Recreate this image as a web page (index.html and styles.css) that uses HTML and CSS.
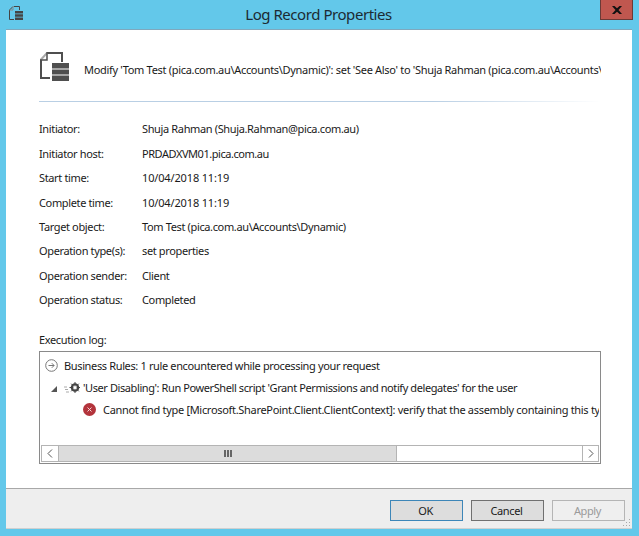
FILE: index.html
```html
<!DOCTYPE html>
<html lang="en">
<head>
<meta charset="utf-8">
<title>Log Record Properties</title>
<link rel="stylesheet" href="styles.css">
</head>
<body>
<div class="window">
  <header class="titlebar">
    <svg class="title-icon" width="15" height="15" viewBox="0 0 15 15"><path d="M5 .5h5.500V4M.5 4v9.500H5M.5 4L4 .5" fill="none" stroke="#444"/><path d="M4 .5V4H.5" fill="none" stroke="#888"/><path d="M6 5h8v2.500H6zM6 8.300h8v2.500H6zM6 11.600h8v2.400H6z" fill="#444"/></svg>
    <h1 class="title">Log Record Properties</h1>
    <button class="close" aria-label="Close"><svg width="10" height="8" viewBox="0 0 10 8"><path d="M0 0h2.500L5 2.300 7.500 0H10L6.500 4 10 8H7.500L5 5.700 2.500 8H0l3.500-4z" fill="#111"/></svg></button>
  </header>
  <main class="client">
    <div class="content">
      <div class="summary">
        <svg class="summary-icon" width="29" height="29" viewBox="0 0 29 29"><path d="M7 1h15v9M1 7.500V26h9" fill="none" stroke="#4f4f4f" stroke-width="2"/><path d="M7 1L1 7.500" fill="none" stroke="#aaa" stroke-width="2"/><path d="M7 0v8H0" fill="none" stroke="#4f4f4f" stroke-width="1.500"/><path d="M12 11h17v5.500H12zM12 17.500h17v5H12zM12 23.500h17V29H12z" fill="#4f4f4f"/></svg>
        <p class="summary-text">Modify 'Tom Test (pica.com.au\Accounts\Dynamic)': set 'See Also' to 'Shuja Rahman (pica.com.au\Accounts\Dynamic)'</p>
      </div>
      <div class="rule"></div>
      <dl class="props">
        <dt>Initiator:</dt><dd>Shuja Rahman (Shuja.Rahman@pica.com.au)</dd>
        <dt>Initiator host:</dt><dd class="host">PRDADXVM01.pica.com.au</dd>
        <dt>Start time:</dt><dd class="date">10/04/2018 11:19</dd>
        <dt>Complete time:</dt><dd class="date">10/04/2018 11:19</dd>
        <dt>Target object:</dt><dd>Tom Test (pica.com.au\Accounts\Dynamic)</dd>
        <dt>Operation type(s):</dt><dd>set properties</dd>
        <dt>Operation sender:</dt><dd>Client</dd>
        <dt>Operation status:</dt><dd>Completed</dd>
      </dl>
      <div class="log-label">Execution log:</div>
      <div class="log">
        <div class="log-rows">
          <div class="log-row">
            <svg class="ico-info" width="13" height="13" viewBox="0 0 13 13"><circle cx="6.500" cy="6.500" r="5.800" fill="none" stroke="#777"/><path d="M3.500 6.500h5.500M6.800 4.200l2.300 2.300-2.300 2.300" fill="none" stroke="#777"/></svg>
            <span>Business Rules: 1 rule encountered while processing your request</span>
          </div>
          <div class="log-row row-two">
            <svg class="ico-tri" width="6" height="6" viewBox="0 0 6 6"><path d="M6 0v6H0z" fill="#555"/></svg>
            <svg class="ico-gear" width="16" height="11" viewBox="0 0 16 11"><path d="M0 5h3M1 7.500h3M2 10h3" stroke="#aaa" fill="none"/><circle cx="11" cy="5.500" r="3.300" fill="none" stroke="#444" stroke-width="2"/><path d="M11 0v11M5.500 5.500h11M7.200 1.700l7.600 7.600M14.800 1.700l-7.600 7.600" stroke="#444"/><circle cx="11" cy="5.500" r="1.600" fill="#fff"/></svg>
            <span>'User Disabling': Run PowerShell script 'Grant Permissions and notify delegates' for the user</span>
          </div>
          <div class="log-row row-three">
            <svg class="ico-err" width="13" height="13" viewBox="0 0 13 13"><circle cx="6.500" cy="6.500" r="6.500" fill="#b3343c"/><path d="M4.500 4.500l4 4M8.500 4.500l-4 4" stroke="#f4d6d6"/></svg>
            <span>Cannot find type [Microsoft.SharePoint.Client.ClientContext]: verify that the assembly containing this type is loaded.</span>
          </div>
        </div>
        <div class="scrollbar">
          <div class="sb-btn"><svg width="6" height="9" viewBox="0 0 6 9"><path d="M5 .5L1 4.500l4 4" fill="none" stroke="#555"/></svg></div>
          <div class="sb-track">
            <div class="sb-thumb"><svg width="8" height="7" viewBox="0 0 8 7"><path d="M0 0h2v7H0zM3 0h2v7H3zM6 0h2v7H6z" fill="#666"/></svg></div>
          </div>
          <div class="sb-btn sb-btn-end"><svg width="6" height="9" viewBox="0 0 6 9"><path d="M1 .5l4 4-4 4" fill="none" stroke="#555"/></svg></div>
        </div>
      </div>
    </div>
    <footer class="footer">
      <button class="btn btn-default">OK</button>
      <button class="btn">Cancel</button>
      <button class="btn btn-disabled">Apply</button>
      <svg class="grip" width="9" height="8" viewBox="0 0 9 8"><path d="M7 0h1v1H7zM4 3h1v1H4zM7 3h1v1H7zM1 6h1v1H1zM4 6h1v1H4zM7 6h1v1H7z" fill="#a9a9a9"/></svg>
    </footer>
  </main>
</div>
</body>
</html>
```
FILE: styles.css
```css
* { box-sizing: border-box; }
html, body { margin: 0; height: 100%; }
body { font-family: "Noto Sans", "Open Sans", sans-serif; font-size: 11px; letter-spacing: -0.360px; color: #1a1a1a; background: #63c8ea; overflow: hidden; }
.window { width: 639px; height: 536px; display: flex; flex-direction: column; padding: 0 7px 7px 6px; }
.titlebar { height: 29px; flex: none; position: relative; margin: 0 -7px 0 -6px; }
.title-icon { position: absolute; left: 9px; top: 6px; }
.title { margin: 0; padding-right: 2px; text-align: center; font-size: 15px; letter-spacing: -0.450px; font-weight: 400; line-height: 29px; color: #1c2b33; }
.close { position: absolute; left: 600px; top: 0; width: 33px; height: 20px; padding: 0; border: 1px solid #6b3a36; border-top: 0; background: #c0574f; display: flex; align-items: center; justify-content: center; }
.client { flex: 1; background: #fff; display: flex; flex-direction: column; border-top: 1px solid #7fa8bd; }
.content { flex: 1; min-height: 0; padding: 0 31px 0 33px; display: flex; flex-direction: column; }
.summary { height: 71px; flex: none; display: flex; align-items: center; padding-top: 1px; }
.summary-icon { flex: none; margin-left: 1px; }
.summary-text { margin: 6px 0 0 15px; white-space: nowrap; overflow: hidden; flex: 1; min-width: 0; letter-spacing: -0.310px; }
.rule { height: 1px; flex: none; background: linear-gradient(to right, #b9cfe4, #b9cfe4 70%, #fff); }
.props { margin: 15.300px 0 0; display: grid; grid-template-columns: 103px 1fr; grid-auto-rows: 24.430px; line-height: 24.430px; }
.props dd { margin: 0; }
.props .date { letter-spacing: -0.150px; }
.props .host { letter-spacing: -0.450px; }
.log-label { margin-top: 15.700px; line-height: 24px; }
.log { height: 113px; margin-top: -1px; border: 1px solid #8a8a8a; padding: 1px; display: flex; flex-direction: column; flex: none; }
.log-rows { flex: 1; min-height: 0; overflow: hidden; padding: 1px 0 0 4px; }
.log-row { height: 22px; display: flex; align-items: center; white-space: nowrap; }
.log-row span { margin-left: 6px; }
.row-two { padding-left: 6px; }
.row-two .ico-gear { margin-left: 7px; }
.row-two span { margin-left: 3px; letter-spacing: -0.410px; }
.row-three { padding-left: 38px; }
.row-three span { margin-left: 7px; letter-spacing: -0.310px; }
.ico-info, .ico-err, .ico-gear, .ico-tri { flex: none; }
.ico-tri { margin-top: 3px; }
.scrollbar { height: 17px; flex: none; display: flex; border: 1px solid #b4b4b4; background: #fff; }
.sb-btn { width: 16px; flex: none; display: flex; align-items: center; justify-content: center; }
.sb-btn-end { border-left: 1px solid #b4b4b4; }
.sb-track { flex: 1; min-width: 0; }
.sb-thumb { width: 339px; height: 100%; background: #dcdcdc; border: 1px solid #b4b4b4; border-width: 0 1px; display: flex; align-items: center; justify-content: center; }
.footer { position: relative; height: 41px; flex: none; background: #eeeeee; border-top: 1px solid #a8a8a8; border-bottom: 1px solid #d0d0d0; display: flex; justify-content: flex-end; align-items: flex-start; gap: 8px; padding: 11px 7px 0 0; }
.grip { position: absolute; right: 1px; bottom: 1px; }
.btn { width: 73px; height: 21px; padding: 0 2px 0 0; border: 1px solid #707070; background: #dddddd; font: inherit; letter-spacing: inherit; color: #1a1a1a; }
.btn-default { border-color: #3d86b8; }
.btn-disabled { border-color: #b5b5b5; background: #efefef; color: #9a9a9a; }
```
